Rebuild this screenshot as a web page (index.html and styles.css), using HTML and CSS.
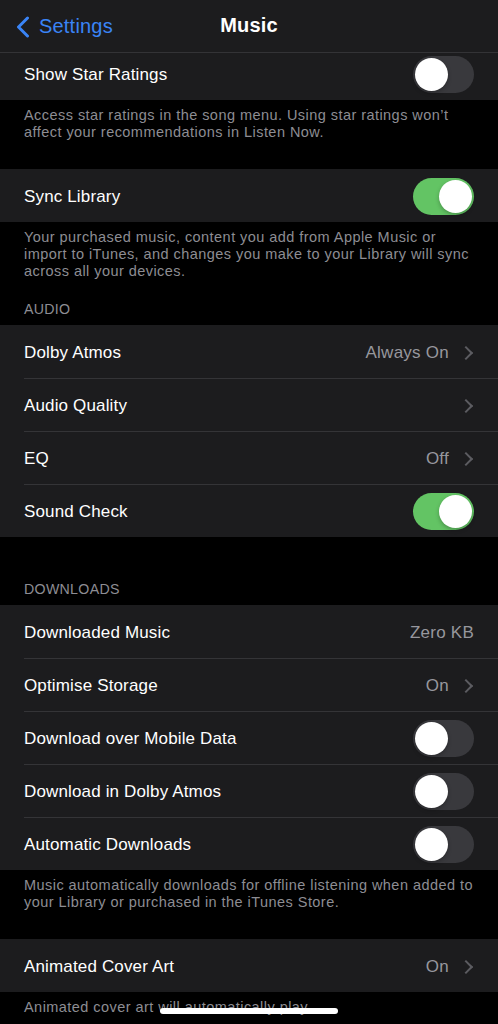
FILE: index.html
```html
<!DOCTYPE html>
<html lang="en">
<head>
  <meta charset="UTF-8">
  <meta name="viewport" content="width=device-width, initial-scale=1.0">
  <title>Music</title>
  <link rel="stylesheet" href="styles.css">
</head>
<body>
  <div class="nav">
    <a class="back" href="#">
      <svg class="back-chevron" width="15" height="22" viewBox="0 0 15 22">
        <path d="M12.5 2 L3.5 11 L12.5 20" fill="none" stroke="#3a84f6" stroke-width="3" stroke-linecap="round" stroke-linejoin="round"/>
      </svg>
      <span>Settings</span>
    </a>
    <div class="title">Music</div>
  </div>

  <div class="page">
    <div class="group first">
      <div class="row">
        <span class="label">Show Star Ratings</span>
        <span class="switch"></span>
      </div>
    </div>
    <p class="footer">Access star ratings in the song menu. Using star ratings won’t affect your recommendations in Listen Now.</p>

    <div class="group">
      <div class="row">
        <span class="label">Sync Library</span>
        <span class="switch on"></span>
      </div>
    </div>
    <p class="footer">Your purchased music, content you add from Apple Music or import to iTunes, and changes you make to your Library will sync across all your devices.</p>

    <div class="header">AUDIO</div>
    <div class="group">
      <div class="row">
        <span class="label">Dolby Atmos</span>
        <span class="value">Always On</span>
        <span class="chevron"></span>
      </div>
      <div class="row">
        <span class="label">Audio Quality</span>
        <span class="chevron"></span>
      </div>
      <div class="row">
        <span class="label">EQ</span>
        <span class="value">Off</span>
        <span class="chevron"></span>
      </div>
      <div class="row">
        <span class="label">Sound Check</span>
        <span class="switch on"></span>
      </div>
    </div>

    <div class="header spaced">DOWNLOADS</div>
    <div class="group">
      <div class="row">
        <span class="label">Downloaded Music</span>
        <span class="value">Zero KB</span>
      </div>
      <div class="row">
        <span class="label">Optimise Storage</span>
        <span class="value">On</span>
        <span class="chevron"></span>
      </div>
      <div class="row">
        <span class="label">Download over Mobile Data</span>
        <span class="switch"></span>
      </div>
      <div class="row">
        <span class="label">Download in Dolby Atmos</span>
        <span class="switch"></span>
      </div>
      <div class="row">
        <span class="label">Automatic Downloads</span>
        <span class="switch"></span>
      </div>
    </div>
    <p class="footer">Music automatically downloads for offline listening when added to your Library or purchased in the iTunes Store.</p>

    <div class="group">
      <div class="row">
        <span class="label">Animated Cover Art</span>
        <span class="value">On</span>
        <span class="chevron"></span>
      </div>
    </div>
    <p class="footer">Animated cover art will automatically play.</p>
  </div>

  <div class="home-indicator"></div>
</body>
</html>
```

FILE: styles.css
```css
body, html {
  margin: 0;
  padding: 0;
  height: 100%;
  background-color: #000;
  color: #fff;
  font-family: "Liberation Sans", Arial, sans-serif;
  overflow: hidden;
}

.nav {
  position: relative;
  z-index: 2;
  height: 52px;
  background-color: #1c1c1e;
  border-bottom: 1px solid #333336;
  display: flex;
  align-items: center;
  justify-content: center;
}

.back {
  position: absolute;
  left: 15px;
  top: 15px;
  display: flex;
  align-items: center;
  gap: 9px;
  color: #3a84f6;
  text-decoration: none;
  font-size: 20px;
  letter-spacing: 0.2px;
}

.back-chevron {
  display: block;
}

.title {
  font-size: 20px;
  font-weight: bold;
  letter-spacing: 0.2px;
  margin-top: -2px;
}

.group {
  background-color: #1c1c1e;
}

.group.first {
  margin-top: -6px;
}

.row {
  height: 53px;
  display: flex;
  align-items: center;
  padding: 0 24px;
  position: relative;
}

.row + .row::before {
  content: "";
  position: absolute;
  top: 0;
  left: 24px;
  right: 0;
  height: 1px;
  background-color: #343437;
}

.label {
  flex: 1;
  font-size: 17px;
  letter-spacing: 0.15px;
  padding-top: 3px;
}

.value {
  color: #97979d;
  font-size: 17px;
  letter-spacing: 0.25px;
  padding-top: 3px;
}

.chevron {
  width: 8px;
  height: 8px;
  border-top: 2px solid #5c5c61;
  border-right: 2px solid #5c5c61;
  transform: rotate(45deg);
  margin-left: 12px;
  margin-right: 3px;
  margin-top: 3px;
}

.switch {
  width: 61px;
  height: 37px;
  border-radius: 19px;
  background-color: #39393d;
  position: relative;
  flex-shrink: 0;
  margin-top: 2px;
}

.switch::after {
  content: "";
  position: absolute;
  top: 2px;
  left: 2px;
  width: 33px;
  height: 33px;
  border-radius: 50%;
  background-color: #fff;
  box-shadow: 0 2px 4px rgba(0, 0, 0, 0.25);
}

.switch.on {
  background-color: #63c464;
}

.switch.on::after {
  left: 26px;
}

.footer {
  margin: 0;
  padding: 7px 24px 28px;
  color: #8d8d93;
  font-size: 14.5px;
  line-height: 17px;
  letter-spacing: 0.45px;
}

.header {
  padding: 0 24px 7px;
  margin-top: -7px;
  color: #8d8d93;
  font-size: 14.2px;
  line-height: 17px;
  letter-spacing: 0.3px;
}

.header.spaced {
  margin-top: 44px;
}

.home-indicator {
  position: fixed;
  left: 160px;
  bottom: 10px;
  width: 178px;
  height: 6px;
  border-radius: 3px;
  background-color: #fff;
}
```
